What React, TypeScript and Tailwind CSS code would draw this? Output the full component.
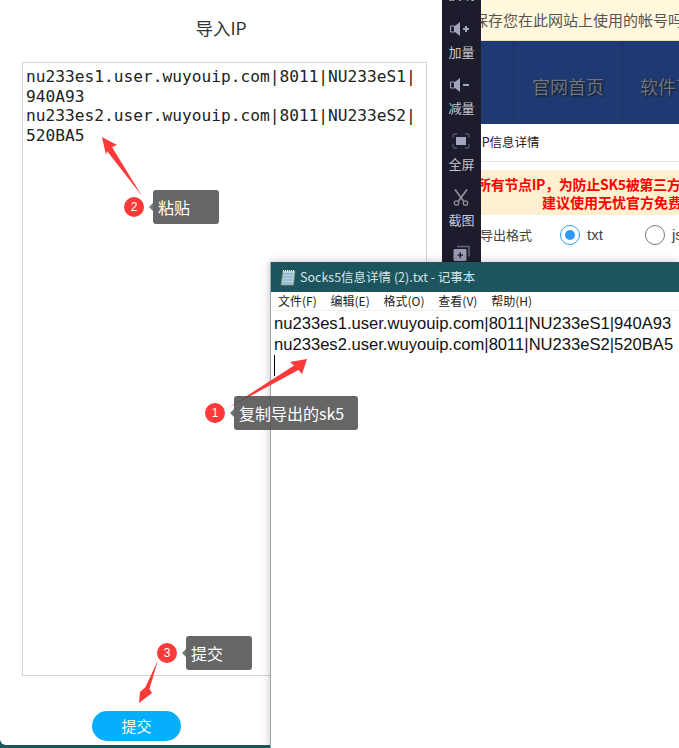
import React from "react";

const cjk = "font-['Noto_Sans_CJK_SC','Noto_Sans',sans-serif]";

const SpeakerIcon = ({ plus }: { plus?: boolean }) => (
  <svg width="22" height="14" viewBox="0 0 22 14" fill="#a5a5c0">
    <path d="M0.500 4h4v6h-4z" fill="none" stroke="#a5a5c0" strokeWidth="1" />
    <path d="M5 4l5-4v14l-5-4z" />
    <path d="M13 6h6v2h-6z" />
    {plus && <path d="M15 4h2v6h-2z" />}
  </svg>
);

const FullIcon = () => (
  <svg width="18" height="16" viewBox="0 0 18 16" fill="none">
    <rect x="4" y="4" width="10" height="8" fill="#a5a5c0" />
    <path d="M1 5V2.500A1.500 1.500 0 0 1 2.500 1H5M13 1h2.500A1.500 1.500 0 0 1 17 2.500V5M17 11v2.500a1.500 1.500 0 0 1-1.500 1.500H13M5 15H2.500A1.500 1.500 0 0 1 1 13.500V11" stroke="#55556a" strokeWidth="1.300" />
  </svg>
);

const ScissorsIcon = () => (
  <svg width="16" height="17" viewBox="0 0 16 17" fill="none" stroke="#8d8d9c">
    <path d="M2 0.500l8.500 11.500M14 0.500L5.500 12" strokeWidth="1.800" />
    <circle cx="3.500" cy="14" r="2.200" strokeWidth="1.300" />
    <circle cx="12.500" cy="14" r="2.200" strokeWidth="1.300" />
  </svg>
);

const AddWindowIcon = () => (
  <svg width="17" height="16" viewBox="0 0 17 16">
    <path d="M4 1.500h12v10" fill="none" stroke="#66667a" strokeWidth="1.500" />
    <rect x="0.500" y="4" width="13" height="12" rx="1.500" fill="#9a9ab2" />
    <path d="M6.500 7.500h1.500v2h2v1.200H8v2H6.500v-2h-2V9.500h2z" fill="#1c1c2c" />
  </svg>
);

const ToolItem = ({ icon, label }: { icon: React.ReactNode; label: string }) => (
  <div className="flex h-[56px] shrink-0 flex-col items-center">
    <div className="flex h-[22px] items-center">{icon}</div>
    <span className="mt-[3px] text-[13px] leading-[18px] text-[#c4c4d2]">{label}</span>
  </div>
);

const Bubble = ({ n, text, className, width }: { n: number; text: string; className: string; width: string }) => (
  <div className={`absolute flex items-center ${cjk} ${className}`}>
    <span className="z-10 flex h-[20px] w-[20px] items-center justify-center rounded-full bg-[#fd3a3a] text-[12px] font-['Liberation_Sans'] text-white">
      {n}
    </span>
    <span className="ml-[5px] h-0 w-0 border-y-[4px] border-r-[4px] border-y-transparent border-r-[#666666] opacity-90" />
    <span className={`flex h-[34px] items-center rounded-[3px] bg-[#555555]/90 pl-[5px] text-[16px] text-white ${width}`}>
      {text}
    </span>
  </div>
);

const NotepadIcon = () => (
  <svg width="16" height="17" viewBox="0 0 16 17" className="mr-[4px]">
    <path d="M3 2h12l-1.500 14H1z" fill="#b5d3e0" stroke="#8a8a78" strokeWidth="0.800" />
    <path d="M3 5h10M2.700 8h10M2.400 11h10M2 14h10" stroke="#6fa0b8" strokeWidth="0.800" />
    <path d="M3 2h12" stroke="#e8e8e8" strokeWidth="2" strokeDasharray="1 1" />
  </svg>
);

export default function App() {
  return (
    <div className={`relative flex h-[748px] w-[679px] overflow-hidden bg-white ${cjk}`}>
      {/* 导入IP 弹窗 */}
      <div className="flex w-[442px] flex-col bg-[#1c555e]">
        <div className="flex h-[745px] flex-col items-start rounded-bl-[6px] bg-white">
          <h2 className="mt-[15px] h-[47px] self-center text-[17.500px] leading-[26px] text-[#333333]">导入IP</h2>
          <div className="ml-[22px] h-[614px] w-[405px] border border-[#d4d4d4] px-[3px] pt-[4px] font-['DejaVu_Sans_Mono',monospace] text-[16.2px] leading-[19.600px] text-[#222222]">
            <div>nu233es1.user.wuyouip.com|8011|NU233eS1|</div>
            <div>940A93</div>
            <div>nu233es2.user.wuyouip.com|8011|NU233eS2|</div>
            <div>520BA5</div>
          </div>
          <button className="ml-[92px] mt-[35px] h-[30px] w-[89px] rounded-full bg-[#06aefc] text-[15px] text-white">
            提交
          </button>
        </div>
      </div>

      {/* 工具栏 */}
      <div className="flex h-[262px] w-[39px] flex-col items-center overflow-hidden bg-[#1c1c2c]">
        <span className="mt-[-15px] h-[33px] shrink-0 text-[13px] leading-[18px] text-[#c4c4d2]">换线</span>
        <ToolItem icon={<SpeakerIcon plus />} label="加量" />
        <ToolItem icon={<SpeakerIcon />} label="减量" />
        <ToolItem icon={<FullIcon />} label="全屏" />
        <ToolItem icon={<ScissorsIcon />} label="截图" />
        <ToolItem icon={<AddWindowIcon />} label="" />
      </div>

      {/* 后面的网页 */}
      <div className="flex h-[262px] flex-1 flex-col overflow-hidden bg-white">
        <div className="h-[41px] shrink-0 whitespace-nowrap border-b border-[#eadfba] bg-[#fff8dc] text-[15px] leading-[39px] text-[#555555]">
          <span className="ml-[-8px]">保存您在此网站上使用的帐号吗</span>
        </div>
        <div className="flex h-[83px] shrink-0 items-center whitespace-nowrap bg-[#1f3a72] pt-[7px] text-[18px] text-[#6e7480] [text-shadow:1px_1px_2px_#111]">
          <span className="mt-[-7px] h-[83px] w-[33px] shrink-0 border-r border-[#1a3263]" />
          <span className="w-[108px] shrink-0 text-center">官网首页</span>
          <span className="mt-[-7px] h-[83px] w-px shrink-0 bg-[#1a3263]" />
          <span className="ml-[17px]">软件下载</span>
        </div>
        <div className="h-[38px] shrink-0 whitespace-nowrap border-b border-[#e2e2ea] text-[12.500px] leading-[36px] text-[#222222]">
          <span className="ml-[-3px]">IP信息详情</span>
        </div>
        <div className="mt-[8px] h-[45px] shrink-0 whitespace-nowrap bg-[#fff1d0] pt-[5px] text-[14px] font-bold leading-[18px] text-[#ff0000]">
          <div className="ml-[-4px] tracking-[-0.3px]">所有节点IP，为防止SK5被第三方使用</div>
          <div className="ml-[61px]">建议使用无忧官方免费软件</div>
        </div>
        <div className="flex h-[40px] shrink-0 items-center whitespace-nowrap text-[15px] text-[#444444]">
          <span className="ml-[-1px] w-[80px] shrink-0 text-[13px]">导出格式</span>
          <span className="flex h-[20px] w-[20px] shrink-0 items-center justify-center rounded-full border border-[#2d9cf0]">
            <span className="h-[10px] w-[10px] rounded-full bg-[#2d9cf0]" />
          </span>
          <span className="ml-[7px] w-[58px] shrink-0 font-['Liberation_Sans']">txt</span>
          <span className="h-[20px] w-[20px] shrink-0 rounded-full border border-[#777777]" />
          <span className="ml-[7px] font-['Liberation_Sans']">json</span>
        </div>
      </div>

      {/* 记事本窗口 */}
      <div className="absolute left-[270px] top-[262px] flex h-[486px] w-[409px] flex-col border-l border-[#9aa9ad] bg-white shadow-[0_0_8px_rgba(0,0,0,0.25)]">
        <div className="flex h-[30px] shrink-0 items-center bg-[#1c555e] pl-[9px] text-[12.500px] text-[#d5e4e6]">
          <NotepadIcon />
          <span>Socks5信息详情 (2).txt - 记事本</span>
        </div>
        <div className="flex h-[19px] shrink-0 items-center gap-[13.800px] border-b border-[#f0f0f0] pl-[7px] text-[12px] text-[#222222]">
          <span>文件(F)</span>
          <span>编辑(E)</span>
          <span>格式(O)</span>
          <span>查看(V)</span>
          <span>帮助(H)</span>
        </div>
        <div className="whitespace-nowrap pl-[3px] pt-[2px] font-['Liberation_Sans',sans-serif] text-[16.600px] leading-[21px] text-[#111111]">
          <div>nu233es1.user.wuyouip.com|8011|NU233eS1|940A93</div>
          <div>nu233es2.user.wuyouip.com|8011|NU233eS2|520BA5</div>
          <div className="h-[21px] w-px bg-black" />
        </div>
      </div>

      {/* 标注箭头 */}
      <svg className="absolute left-0 top-0" width="679" height="748" fill="#fd3a3a">
        <path d="M228 408L294 365.500 290 362 307 359 302 374 298.500 370z" />
        <path d="M142 196L107 151 106 155 102 137 117 145 112 147z" />
        <path d="M158 660L145.500 687 140 692 139 703 152 693 149.500 689z" />
      </svg>
      <Bubble n={1} text="复制导出的sk5" width="w-[124px]" className="left-[205px] top-[396px]" />
      <Bubble n={2} text="粘贴" width="w-[66px]" className="left-[124px] top-[190px]" />
      <Bubble n={3} text="提交" width="w-[66px]" className="left-[157px] top-[636px]" />
    </div>
  );
}
